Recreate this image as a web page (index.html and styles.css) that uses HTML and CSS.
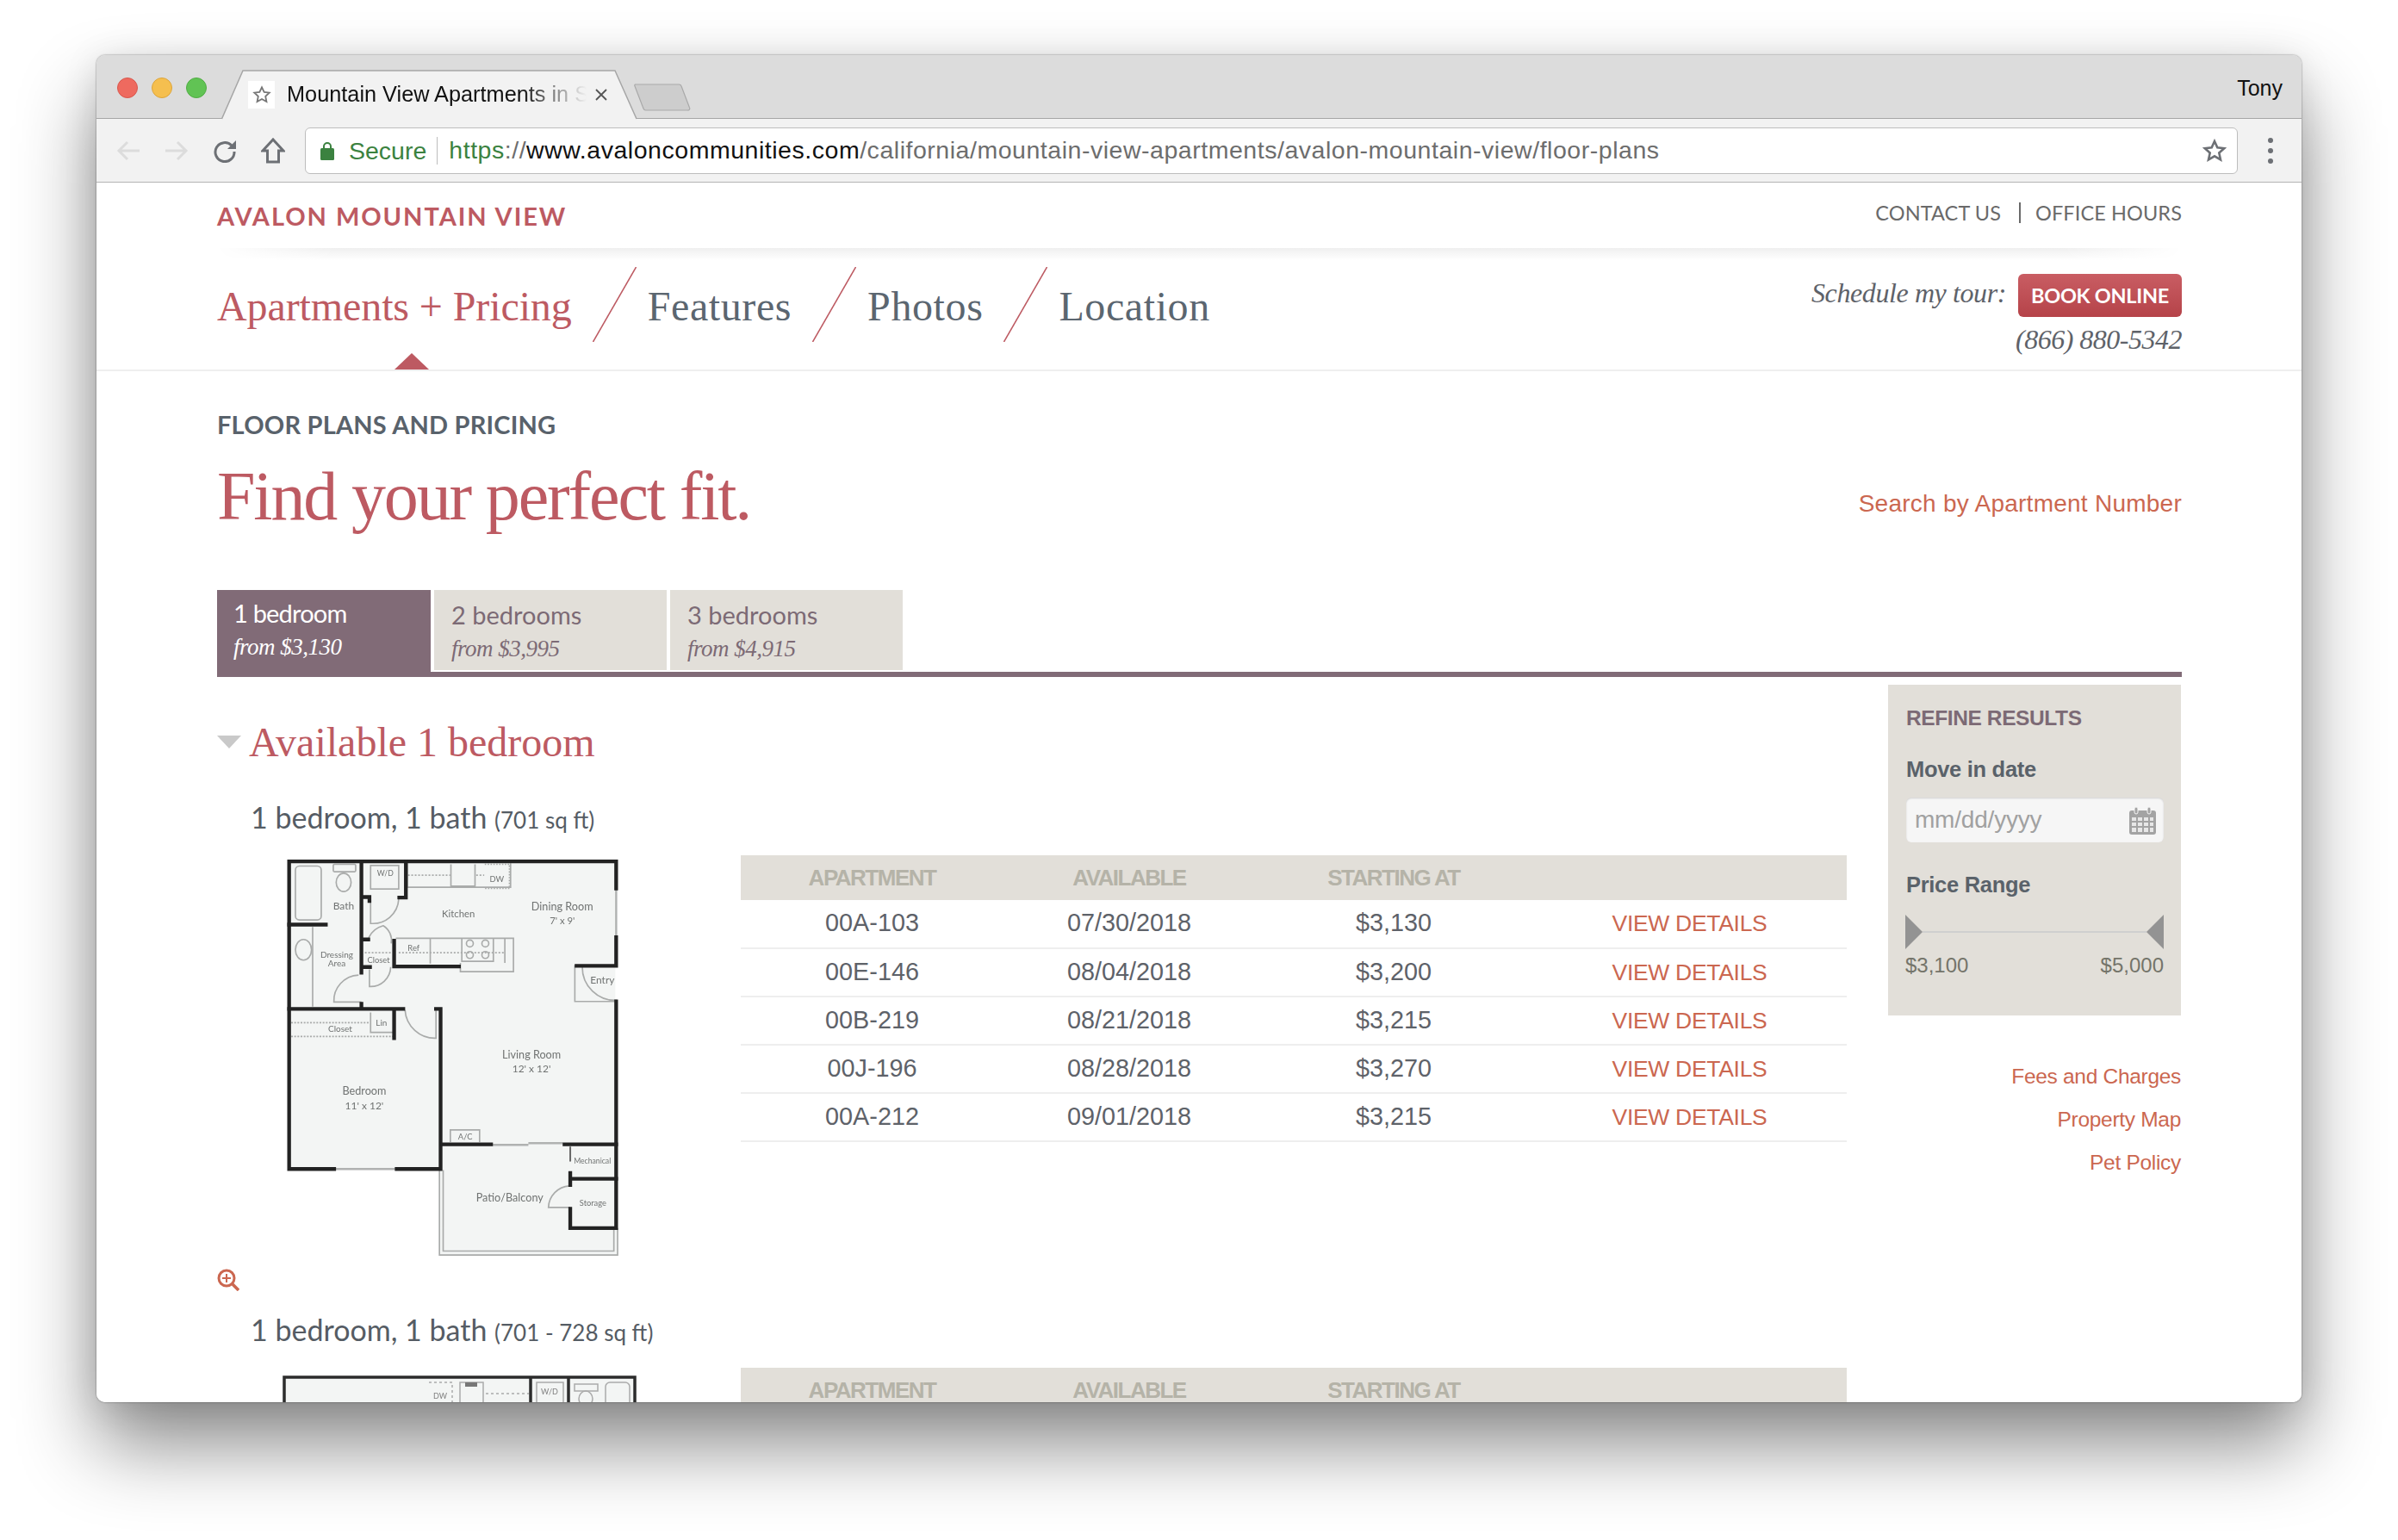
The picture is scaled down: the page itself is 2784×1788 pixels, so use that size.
FILE: index.html
```html
<!DOCTYPE html>
<html lang="en">
<head>
<meta charset="utf-8">
<title>Mountain View Apartments</title>
<link rel="stylesheet" href="styles.css">
</head>
<body>
<div class="window">
  <div class="tabstrip">
    <div class="lights"><i class="light red"></i><i class="light yellow"></i><i class="light green"></i></div>
    <div class="tab">
      <svg class="tab-shape" viewBox="0 0 484 58" width="484" height="58"><path d="M0.5 57 L25 1 H457 L482 57" fill="#f2f2f2" stroke="#a6a6a6" stroke-width="1.5"/></svg>
      <span class="favicon"><svg viewBox="0 0 24 24" width="22" height="22"><path d="M12 2.5l2.9 6.2 6.6.8-4.9 4.6 1.3 6.7L12 17.4l-5.9 3.4 1.3-6.7-4.9-4.6 6.6-.8z" fill="none" stroke="#777" stroke-width="2"/></svg></span>
      <span class="tab-title">Mountain View Apartments in San Francisco</span>
      <svg class="tab-close" viewBox="0 0 16 16" width="16" height="16"><path d="M2 2L14 14M14 2L2 14" stroke="#555" stroke-width="1.8"/></svg>
    </div>
    <svg class="newtab" viewBox="0 0 66 32" width="66" height="32"><path d="M1.5 1H52a3 3 0 0 1 3 2L64.500 28a2 2 0 0 1-2 3H14a3 3 0 0 1-3-2L1 3a1.500 1.500 0 0 1 .5-2z" fill="#cdcdcd" stroke="#a9a9a9" stroke-width="1.200"/></svg>
    <span class="profile">Tony</span>
  </div>
  <div class="toolbar">
    <svg class="tool tool-back" viewBox="0 0 28 26" width="28" height="26"><path d="M27 13H3M13 3L3 13l10 10" fill="none" stroke="#dcdcdc" stroke-width="3"/></svg>
    <svg class="tool tool-fwd" viewBox="0 0 28 26" width="28" height="26"><path d="M1 13h24M15 3l10 10-10 10" fill="none" stroke="#dcdcdc" stroke-width="3"/></svg>
    <svg class="tool tool-reload" viewBox="0 0 28 28" width="28" height="28"><path d="M22 8A11 11 0 1 0 25 15" fill="none" stroke="#6d7075" stroke-width="3"/><path d="M27 2V12H17z" fill="#6d7075"/></svg>
    <svg class="tool tool-home" viewBox="0 0 28 30" width="28" height="30"><path d="M14 2L2 15H7.500V28H20.500V15H26z" fill="none" stroke="#6d7075" stroke-width="3" stroke-linejoin="miter"/></svg>
    <div class="omnibox">
      <svg class="lock" viewBox="0 0 16 22" width="16" height="22"><path d="M4 9V6a4 4 0 0 1 8 0v3" fill="none" stroke="#3b8240" stroke-width="2"/><rect x="0" y="8" width="16" height="14" rx="1.500" fill="#3b8240"/></svg>
      <span class="secure">Secure</span>
      <span class="url"><span class="url-green">https</span><span class="url-grey">://</span><span class="url-dark">www.avaloncommunities.com</span><span class="url-grey">/california/mountain-view-apartments/avalon-mountain-view/floor-plans</span></span>
      <svg class="omni-star" viewBox="0 0 28 28" width="28" height="28"><path d="M14 3l3.300 7.300 7.900.9-5.900 5.300 1.700 7.800L14 20.300l-7 4 1.700-7.800-5.900-5.300 7.900-.9z" fill="none" stroke="#6d7075" stroke-width="2.600"/></svg>
    </div>
    <div class="kebab"><i></i><i></i><i></i></div>
  </div>

  <div class="page">
    <div class="site-top">
      <a class="brand">AVALON MOUNTAIN VIEW</a>
      <div class="util"><a>CONTACT US</a><span class="util-sep"></span><a>OFFICE HOURS</a></div>
    </div>
    <div class="soft-rule"></div>
    <nav class="nav">
      <a class="nav-item active">Apartments + Pricing</a>
      <svg class="slash" viewBox="0 0 51 87" width="51" height="87"><path d="M50.500 0L.5 87" stroke="#bd5a62" stroke-width="1.500"/></svg>
      <a class="nav-item">Features</a>
      <svg class="slash" viewBox="0 0 51 87" width="51" height="87"><path d="M50.500 0L.5 87" stroke="#bd5a62" stroke-width="1.500"/></svg>
      <a class="nav-item">Photos</a>
      <svg class="slash" viewBox="0 0 51 87" width="51" height="87"><path d="M50.500 0L.5 87" stroke="#bd5a62" stroke-width="1.500"/></svg>
      <a class="nav-item">Location</a>
      <div class="tour">
        <div class="tour-row"><span class="tour-label">Schedule my tour:</span><a class="book">BOOK ONLINE</a></div>
        <div class="phone">(866) 880-5342</div>
      </div>
      <i class="nav-caret"></i>
    </nav>

    <main class="main">
      <div class="head">
        <div>
          <div class="eyebrow">FLOOR PLANS AND PRICING</div>
          <h1 class="headline">Find your perfect fit.</h1>
        </div>
        <a class="search-link">Search by Apartment Number</a>
      </div>

      <div class="tabs">
        <div class="bed-tab current"><div class="bed-name">1 bedroom</div><div class="bed-price">from $3,130</div></div>
        <div class="bed-tab wide"><div class="bed-name">2 bedrooms</div><div class="bed-price">from $3,995</div></div>
        <div class="bed-tab wide"><div class="bed-name">3 bedrooms</div><div class="bed-price">from $4,915</div></div>
      </div>
      <div class="tabs-bar"></div>

      <div class="columns">
        <section class="results">
          <h2 class="avail"><i class="avail-caret"></i>Available 1 bedroom</h2>

          <article class="plan">
            <h3 class="plan-title">1 bedroom, 1 bath <small>(701 sq ft)</small></h3>
            <div class="plan-row">
              <div class="plan-fig">
                <svg class="plan-svg" viewBox="100 85 1156 1386" width="385" height="462">
                  <path d="M103 88H1253V460H1245V575H1253V1468H632V1170H103Z" fill="#f3f5f4"/>
                  <g fill="none" stroke="#a9abaa" stroke-width="5">
                    <path d="M632 1170V1466H1253V1372M645 1170V1452H1240V1375"/>
                    <rect x="130" y="110" width="90" height="188" rx="14"/>
                    <rect x="262" y="104" width="78" height="26" rx="4"/>
                    <ellipse cx="298" cy="167" rx="26" ry="32"/>
                    <ellipse cx="158" cy="402" rx="28" ry="36"/>
                    <path d="M190 322V600"/>
                    <rect x="392" y="108" width="98" height="82"/>
                    <path d="M520 100V184H880V100M672 104V180H756V104"/>
                    <path d="M790 104H876V188H790" stroke-dasharray="5 5"/>
                    <path d="M522 142H670M760 142H788" stroke-dasharray="6 6"/>
                    <path d="M480 362H890V478H705V448"/>
                    <path d="M600 362V450M710 362V442H820V362M860 362V448"/>
                    <circle cx="738" cy="380" r="12"/><circle cx="792" cy="380" r="12"/><circle cx="738" cy="420" r="12"/><circle cx="792" cy="420" r="12"/>
                    <path d="M490 412H860M372 412H466" stroke-dasharray="6 6"/>
                    <path d="M392 228V310A90 90 0 0 0 490 226"/>
                    <path d="M385 360A80 80 0 0 1 436 318A60 60 0 0 1 464 380"/>
                    <path d="M388 470V530A70 70 0 0 0 462 462"/>
                    <path d="M350 490A90 90 0 0 0 264 584H360"/>
                    <path d="M512 612A105 105 0 0 0 620 710V610"/>
                    <path d="M1245 458H1104V582H1245M1130 462A115 115 0 0 0 1250 578"/>
                    <path d="M115 656H390M115 704H470" stroke-dasharray="6 5"/>
                    <path d="M392 620V690H470"/>
                    <path d="M670 1072V1030H772V1072"/>
                    <path d="M1085 1225A78 78 0 0 0 1012 1300H1088"/>
                  </g>
                  <g fill="none" stroke="#b0b2b1" stroke-width="7">
                    <path d="M1248 190V355M265 1166H483M818 1082H942M942 1076H1062"/>
                  </g>
                  <g fill="none" stroke="#222" stroke-width="13" stroke-linecap="square">
                    <path d="M108 94H1248M108 94V1166H265M483 1166H636M636 608V1166M620 608H636M1248 94V188M1248 358V456M1248 582V1372H1088V1305M1110 458H1248"/>
                    <path d="M108 314H236M360 94V482M360 590V606M108 608H506M474 610V710M515 94V220H492M366 218H388V232"/>
                    <path d="M366 366H384M366 462H390M474 370V460H700M640 1080H812M1068 1080H1248M1088 1180V1222M1088 1200H1248"/>
                  </g>
                  <path d="M1088 1088V1140" stroke="#666" stroke-width="6"/>
                  <g class="plan-labels">
                    <text x="298" y="262" font-size="36" text-anchor="middle">Bath</text>
                    <text x="274" y="430" font-size="30" text-anchor="middle">Dressing</text>
                    <text x="274" y="461" font-size="30" text-anchor="middle">Area</text>
                    <text x="443" y="144" font-size="26" text-anchor="middle">W/D</text>
                    <text x="832" y="166" font-size="28" text-anchor="middle">DW</text>
                    <text x="698" y="288" font-size="34" text-anchor="middle">Kitchen</text>
                    <text x="1060" y="264" font-size="38" text-anchor="middle">Dining Room</text>
                    <text x="1060" y="312" font-size="34" text-anchor="middle">7' x 9'</text>
                    <text x="420" y="447" font-size="28" text-anchor="middle">Closet</text>
                    <text x="542" y="406" font-size="28" text-anchor="middle">Ref</text>
                    <text x="1200" y="520" font-size="36" text-anchor="middle">Entry</text>
                    <text x="430" y="666" font-size="30" text-anchor="middle">Lin</text>
                    <text x="286" y="688" font-size="30" text-anchor="middle">Closet</text>
                    <text x="953" y="780" font-size="38" text-anchor="middle">Living Room</text>
                    <text x="953" y="830" font-size="36" text-anchor="middle">12' x 12'</text>
                    <text x="370" y="908" font-size="38" text-anchor="middle">Bedroom</text>
                    <text x="370" y="958" font-size="36" text-anchor="middle">11' x 12'</text>
                    <text x="722" y="1064" font-size="28" text-anchor="middle">A/C</text>
                    <text x="1165" y="1148" font-size="26" text-anchor="middle">Mechanical</text>
                    <text x="877" y="1280" font-size="38" text-anchor="middle">Patio/Balcony</text>
                    <text x="1167" y="1294" font-size="28" text-anchor="middle">Storage</text>
                  </g>
                </svg>
                <svg class="zoom-icon" viewBox="0 0 26 26" width="26" height="26"><circle cx="11" cy="11" r="9" fill="none" stroke="#cb6750" stroke-width="3"/><path d="M11 6v10M6 11h10" stroke="#cb6750" stroke-width="2"/><path d="M17 17l8 8" stroke="#cb6750" stroke-width="3.600"/></svg>
              </div>
              <table class="units">
                <thead><tr><th>APARTMENT</th><th>AVAILABLE</th><th>STARTING AT</th><th></th></tr></thead>
                <tbody>
                  <tr><td>00A-103</td><td>07/30/2018</td><td>$3,130</td><td><a class="details">VIEW DETAILS</a></td></tr>
                  <tr><td>00E-146</td><td>08/04/2018</td><td>$3,200</td><td><a class="details">VIEW DETAILS</a></td></tr>
                  <tr><td>00B-219</td><td>08/21/2018</td><td>$3,215</td><td><a class="details">VIEW DETAILS</a></td></tr>
                  <tr><td>00J-196</td><td>08/28/2018</td><td>$3,270</td><td><a class="details">VIEW DETAILS</a></td></tr>
                  <tr><td>00A-212</td><td>09/01/2018</td><td>$3,215</td><td><a class="details">VIEW DETAILS</a></td></tr>
                </tbody>
              </table>
            </div>
          </article>

          <article class="plan">
            <h3 class="plan-title">1 bedroom, 1 bath <small>(701 - 728 sq ft)</small></h3>
            <div class="plan-row">
              <div class="plan-fig">
                <svg class="plan-svg-2" viewBox="0 0 411 60" width="411" height="60">
                  <rect x="0" y="0" width="411" height="60" fill="#f3f5f4"/>
                  <path d="M2 60V2H409V60M288 2V60M332 2V60" fill="none" stroke="#2c2c2c" stroke-width="3.500"/>
                  <g fill="none" stroke="#aaa" stroke-width="1.500">
                    <path d="M170 8H197V36H170" stroke-dasharray="3 3"/>
                    <rect x="206" y="8" width="27" height="30"/>
                    <path d="M236 21H286" stroke-dasharray="3 3"/>
                    <rect x="295" y="8" width="31" height="32"/>
                    <rect x="339" y="10" width="27" height="8"/>
                    <ellipse cx="352" cy="27" rx="8" ry="9"/>
                    <rect x="375" y="8" width="28" height="50" rx="5"/>
                  </g>
                  <path d="M212 8h14v5h-14z" fill="#777"/>
                  <g class="plan-labels-2">
                    <text x="183" y="27" font-size="9" text-anchor="middle">DW</text>
                    <text x="310" y="22" font-size="9" text-anchor="middle">W/D</text>
                  </g>
                </svg>
              </div>
              <table class="units">
                <thead><tr><th>APARTMENT</th><th>AVAILABLE</th><th>STARTING AT</th><th></th></tr></thead>
              </table>
            </div>
          </article>
        </section>

        <aside class="side">
          <div class="refine">
            <div class="refine-title">REFINE RESULTS</div>
            <div class="refine-label first">Move in date</div>
            <div class="date-input">
              <span class="date-ph">mm/dd/yyyy</span>
              <svg class="cal" viewBox="0 0 31 33" width="31" height="33"><rect x="0" y="5" width="31" height="28" rx="3" fill="#a3a3a3"/><g fill="#e7e7e7"><rect x="3" y="13" width="5" height="4"/><rect x="10" y="13" width="5" height="4"/><rect x="17" y="13" width="5" height="4"/><rect x="24" y="13" width="4" height="4"/><rect x="3" y="19" width="5" height="4"/><rect x="10" y="19" width="5" height="4"/><rect x="17" y="19" width="5" height="4"/><rect x="24" y="19" width="4" height="4"/><rect x="3" y="25" width="5" height="5"/><rect x="10" y="25" width="5" height="5"/><rect x="17" y="25" width="5" height="5"/><rect x="24" y="25" width="4" height="5"/></g><rect x="6" y="1" width="4" height="8" rx="2" fill="#a3a3a3" stroke="#f6f6f6"/><rect x="21" y="1" width="4" height="8" rx="2" fill="#a3a3a3" stroke="#f6f6f6"/></svg>
            </div>
            <div class="refine-label range">Price Range</div>
            <div class="slider"><i class="thumb-l"></i><span class="track"></span><i class="thumb-r"></i></div>
            <div class="range-vals"><span>$3,100</span><span>$5,000</span></div>
          </div>
          <ul class="side-links">
            <li><a>Fees and Charges</a></li>
            <li><a>Property Map</a></li>
            <li><a>Pet Policy</a></li>
          </ul>
        </aside>
      </div>
    </main>
  </div>
</div>
</body>
</html>
```

FILE: styles.css
```css
* { box-sizing: border-box; }
html, body { margin: 0; padding: 0; background: #fff; }
body { height: 1788px; overflow: hidden; padding: 64px 112px 0; }
a { color: inherit; text-decoration: none; }
h1, h2, h3, ul { margin: 0; padding: 0; font-weight: normal; }
i { display: block; }

.window {
  width: 2560px; height: 1564px; display: flex; flex-direction: column;
  border-radius: 10px; overflow: hidden; background: #fff;
  box-shadow: 0 0 2px rgba(0,0,0,.55), 0 50px 90px rgba(0,0,0,.46), 0 4px 40px rgba(0,0,0,.1);
  font-family: "Liberation Sans", Arial, sans-serif;
}

/* browser chrome */
.tabstrip {
  height: 74px; flex: none; background: #dcdcdc; border-bottom: 1.5px solid #a6a6a6;
  display: flex; align-items: flex-end; position: relative; padding-left: 24px;
}
.lights { display: flex; gap: 16px; align-self: flex-start; margin-top: 26px; }
.light { width: 24px; height: 24px; border-radius: 50%; }
.red { background: #ee6a5f; border: 1px solid #d9574d; }
.yellow { background: #f5bf4f; border: 1px solid #dca53c; }
.green { background: #61c354; border: 1px solid #50ad43; }
.tab { position: relative; width: 484px; height: 57px; margin-left: 17px; margin-bottom: -1px; display: flex; align-items: center; }
.tab-shape { position: absolute; left: 0; top: 0; }
.favicon { position: relative; margin-left: 31px; width: 31px; height: 32px; background: #fff; display: flex; align-items: center; justify-content: center; }
.tab-title {
  position: relative; margin-left: 14px; width: 348px; white-space: nowrap; overflow: hidden; font-size: 25.300px; color: #111;
  -webkit-mask-image: linear-gradient(90deg, #000 78%, transparent 100%); mask-image: linear-gradient(90deg, #000 78%, transparent 100%);
}
.tab-close { position: relative; margin-left: 9px; }
.newtab { align-self: flex-start; margin: 33px 0 0 -5px; }
.profile { position: absolute; right: 22px; top: 24px; font-size: 25px; color: #111; }

.toolbar { height: 74px; flex: none; background: #f2f2f2; border-bottom: 1.5px solid #b4b4b4; display: flex; align-items: center; }
.tool { flex: none; }
.tool-back { margin-left: 23px; }
.tool-fwd { margin-left: 28px; }
.tool-reload { margin-left: 28px; }
.tool-home { margin-left: 28px; }
.omnibox {
  margin-left: 23px; width: 2244px; height: 54px; background: #fff; border: 1.5px solid #bdbdbd; border-radius: 6px;
  display: flex; align-items: center; padding-left: 17px; font-size: 28.5px; white-space: nowrap;
}
.lock { flex: none; }
.secure { margin-left: 17px; color: #3b8240; padding-right: 12px; border-right: 1.5px solid #bdbdbd; line-height: 32px; height: 32px; }
.url { margin-left: 13px; color: #6d6d6d; letter-spacing: .53px; }
.url-green { color: #3b8240; }
.url-grey { color: #6d6d6d; }
.url-dark { color: #111; }
.omni-star { margin-left: auto; margin-right: 12px; }
.kebab { margin-left: 35px; display: flex; flex-direction: column; gap: 6px; }
.kebab i { width: 6px; height: 6px; border-radius: 50%; background: #6d7075; }

/* site header */
.page { flex: 1; min-height: 0; overflow: hidden; background: #fff; color: #5b6169; }
.site-top { height: 76px; padding: 0 139px 0 140px; display: flex; justify-content: space-between; align-items: center; }
.brand { font-family: Lato, sans-serif; font-weight: 700; font-size: 29px; letter-spacing: 1.95px; color: #bd5a62; margin-top: 1px; }
.util { display: flex; align-items: center; font-family: Lato, sans-serif; font-size: 23.500px; letter-spacing: .1px; color: #6a6a6a; margin-top: -7px; }
.util-sep { width: 2px; height: 24px; background: #6a6a6a; margin: 0 17px 0 21px; }
.soft-rule {
  height: 14px; margin: 0 139px 0 140px; background: linear-gradient(#efefef, #fff);
  -webkit-mask-image: linear-gradient(90deg, transparent, #000 6%, #000 94%, transparent); mask-image: linear-gradient(90deg, transparent, #000 6%, #000 94%, transparent);
}
.nav { position: relative; height: 129px; padding: 8px 139px 0 140px; border-bottom: 2px solid #efefef; display: flex; align-items: flex-start; font-family: "Liberation Serif", serif; }
.nav-item { font-size: 48px; line-height: 87px; color: #5b6670; white-space: nowrap; height: 87px; padding-top: 2px; letter-spacing: .6px; }
.nav-item.active { color: #bd5a62; letter-spacing: -.1px; }
.slash { flex: none; margin: 0 13px 0 24px; }
.nav-caret { position: absolute; left: 346px; bottom: 0; width: 0; height: 0; border-left: 20px solid transparent; border-right: 20px solid transparent; border-bottom: 19px solid #bd5a62; }
.tour { margin-left: auto; margin-top: 8px; display: flex; flex-direction: column; align-items: flex-end; }
.tour-row { display: flex; align-items: center; gap: 14px; }
.tour-label { font-style: italic; font-size: 32px; letter-spacing: -.4px; color: #5e6269; margin-top: -6px; }
.book {
  width: 190px; height: 50px; border-radius: 6px; background: linear-gradient(#c95d63, #b54349);
  font-family: Lato, sans-serif; font-weight: 700; font-size: 23.500px; letter-spacing: -.3px; color: #fff; display: flex; align-items: center; justify-content: center;
}
.phone { font-style: italic; font-size: 32px; letter-spacing: -.5px; color: #5e6269; margin-top: 7px; line-height: 38px; }

/* main */
.main { padding: 44px 139px 0 140px; }
.head { display: flex; justify-content: space-between; }
.eyebrow { font-family: Lato, sans-serif; font-weight: 700; font-size: 29px; line-height: 36px; letter-spacing: .2px; color: #59626b; }
.headline { font-family: "Liberation Serif", serif; font-size: 80px; line-height: 96px; letter-spacing: -2.150px; color: #bd5a62; margin-top: 17px; }
.search-link { align-self: flex-end; margin-bottom: 21px; font-size: 28px; line-height: 36px; letter-spacing: .25px; color: #cb6750; }

.tabs { display: flex; align-items: flex-start; gap: 4px; margin-top: 61px; height: 95px; }
.bed-tab { height: 93px; background: #e2dfd9; color: #7c6a75; padding: 12px 0 0 20px; width: 270px; }
.bed-tab.current { height: 95px; width: 248px; background: #816b77; color: #fff; padding: 10px 0 0 19px; }
.bed-name { font-family: Lato, sans-serif; font-size: 29px; line-height: 34px; }
.current .bed-name { letter-spacing: -.8px; }
.bed-price { font-family: "Liberation Serif", serif; font-style: italic; font-size: 27px; line-height: 36px; letter-spacing: -.5px; margin-top: 4px; }
.tabs-bar { height: 6px; background: #816b77; }

.columns { display: flex; gap: 48px; align-items: flex-start; }
.results { width: 1892px; padding-top: 46px; }
.avail { position: relative; font-family: "Liberation Serif", serif; font-size: 48px; line-height: 60px; color: #bd5a62; padding-left: 37px; margin-bottom: 35px; }
.avail-caret { position: absolute; left: 0; top: 22px; width: 0; height: 0; border-left: 14px solid transparent; border-right: 14px solid transparent; border-top: 15px solid #c9c9c9; }
.plan { height: 595px; }
.plan-title { font-family: Lato, sans-serif; font-size: 34px; line-height: 44px; padding-left: 39px; color: #555c64; }
.plan-title small { font-size: 26px; }
.plan-row { display: flex; margin-top: 19px; align-items: flex-start; }
.plan-fig { width: 608px; flex: none; }
.plan-svg { display: block; margin: 4px 0 14px 81px; filter: blur(.5px); }
.plan-svg-2 { display: block; margin: 9px 0 0 76px; filter: blur(.4px); }
.plan-labels { font-family: Lato, sans-serif; fill: #707372; }
.plan-labels-2 { font-family: Lato, sans-serif; fill: #808080; }
.zoom-icon { display: block; }

.units { width: 1284px; border-collapse: collapse; table-layout: fixed; font-size: 28.800px; color: #5e6269; text-align: center; }
.units th { height: 52px; padding: 0; background: #e2dfd9; color: #b5b3a8; font-size: 26px; font-weight: 700; letter-spacing: -1.500px; }
.units th:nth-child(1) { width: 305px; }
.units th:nth-child(2) { width: 292px; }
.units th:nth-child(3) { width: 322px; }
.units td { height: 56px; padding: 0 0 2px; border-bottom: 2px solid #eee; }
.details { color: #cb6750; font-size: 26.500px; letter-spacing: -.3px; }

/* sidebar */
.side { width: 340px; flex: none; margin-top: 9px; }
.refine { height: 384px; background: #e2dfd9; padding: 24px 20px 0 21px; }
.refine-title { font-size: 24.500px; line-height: 30px; font-weight: 700; color: #7c6a75; letter-spacing: -.4px; }
.refine-label { font-size: 25.500px; line-height: 30px; font-weight: 700; color: #5a626a; letter-spacing: -.3px; }
.refine-label.first { margin-top: 29px; }
.refine-label.range { margin-top: 34px; }
.date-input { margin-top: 18px; height: 52px; background: #f6f6f6; border-radius: 6px; box-shadow: inset 0 1px 2px rgba(0,0,0,.15); display: flex; align-items: center; justify-content: space-between; padding: 0 9px 0 10px; }
.date-ph { font-size: 28px; color: #a1a1a1; letter-spacing: -.2px; }
.slider { margin-top: 20px; height: 39px; display: flex; align-items: center; margin-left: -1px; }
.thumb-l { width: 0; height: 0; border-top: 20px solid transparent; border-bottom: 20px solid transparent; border-left: 20px solid #939393; }
.thumb-r { width: 0; height: 0; border-top: 20px solid transparent; border-bottom: 20px solid transparent; border-right: 20px solid #939393; }
.track { flex: 1; height: 2px; background: #cfcfcf; }
.range-vals { margin-top: 5px; margin-left: -1px; display: flex; justify-content: space-between; font-size: 24px; line-height: 30px; color: #74746a; }
.side-links { list-style: none; margin-top: 46px; text-align: right; font-size: 24.500px; line-height: 50px; letter-spacing: -.3px; color: #cb6750; }
```
